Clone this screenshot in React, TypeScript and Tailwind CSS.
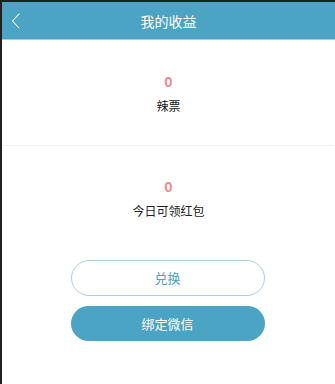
export default function App() {
  return (
    <div className="w-[335px] h-[384px] bg-[#202020] pt-[2px] pl-[2px] overflow-hidden" style={{ fontFamily: '"Noto Sans CJK SC", "Noto Sans", sans-serif' }}>
      <div className="w-full h-full bg-white flex flex-col">
        <div className="h-[38px] bg-[#4ba4c3] flex items-center relative border-b border-[#9fd0e0]">
          <svg className="absolute left-[9px] top-[11px]" width="10" height="16" viewBox="0 0 10 16" fill="none">
            <path d="M8 1 L1.5 8 L8 15" stroke="#ffffff" strokeWidth="1.1" strokeLinecap="round" strokeLinejoin="round" />
          </svg>
          <div className="flex-1 text-center text-white text-[14px] leading-none">我的收益</div>
        </div>
        <div className="flex flex-col items-center pt-[34px] h-[105px]">
          <div className="text-[#ef8a8e] text-[14px] font-bold leading-none">0</div>
          <div className="text-[#222] text-[12px] leading-none mt-[12px]">辣票</div>
        </div>
        <div className="h-px bg-[#efefef] mx-[1px]" />
        <div className="flex flex-col items-center pt-[33px]">
          <div className="text-[#ef8a8e] text-[14px] font-bold leading-none">0</div>
          <div className="text-[#222] text-[12px] leading-none mt-[12px]">今日可领红包</div>
        </div>
        <div className="flex flex-col items-center mt-[43px] gap-[10px] pr-[2px]">
          <div className="w-[194px] h-[36px] rounded-full border border-[#a9cfdc] flex items-center justify-center text-[#4ba4c3] text-[13px]">兑换</div>
          <div className="w-[194px] h-[35px] rounded-full bg-[#4ba4c3] flex items-center justify-center text-white text-[13px]">绑定微信</div>
        </div>
      </div>
    </div>
  );
}
